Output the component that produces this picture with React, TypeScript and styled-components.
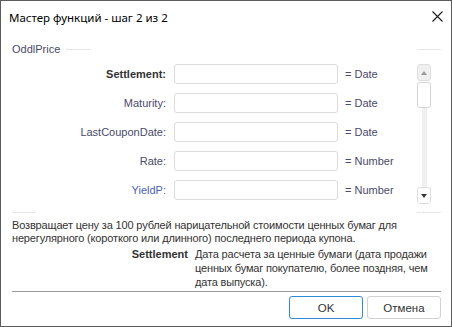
import styled, { createGlobalStyle } from "styled-components";

const GlobalStyle = createGlobalStyle`
  html, body {
    margin: 0;
    padding: 0;
    background: #ffffff;
  }
`;

type Arg = {
  name: string;
  type: string;
  bold?: boolean;
  link?: boolean;
};

const args: Arg[] = [
  { name: "Settlement", type: "Date", bold: true },
  { name: "Maturity", type: "Date" },
  { name: "LastCouponDate", type: "Date" },
  { name: "Rate", type: "Number" },
  { name: "YieldP", type: "Number", link: true },
];

export default function App() {
  return (
    <>
      <GlobalStyle />
      <Window>
        <TitleBar>
          <Title>Мастер функций - шаг 2 из 2</Title>
          <CloseButton type="button" aria-label="Закрыть">
            <svg width="11" height="11" viewBox="0 0 11 11">
              <path d="M0.5 0.5 L10.5 10.5 M10.5 0.5 L0.5 10.5" stroke="#1a1a1a" strokeWidth="1.1" />
            </svg>
          </CloseButton>
        </TitleBar>

        <Group>
          <LegendRow>
            <Legend>OddlPrice</Legend>
            <EdgeLine />
            <Spacer />
            <EdgeLine />
          </LegendRow>

          <FieldsArea>
            <FieldsGrid>
              {args.map((arg) => (
                <FieldRow key={arg.name}>
                  <FieldLabel $bold={arg.bold} $link={arg.link}>
                    {arg.name}:
                  </FieldLabel>
                  <FieldInput type="text" />
                  <FieldType>= {arg.type}</FieldType>
                </FieldRow>
              ))}
            </FieldsGrid>

            <ScrollBar>
              <ScrollButton $muted>
                <svg width="6" height="4" viewBox="0 0 6 4">
                  <path d="M0 4 L3 0 L6 4 Z" fill="#9a9a9a" />
                </svg>
              </ScrollButton>
              <ScrollThumb />
              <ScrollTrack />
              <ScrollButton>
                <svg width="6" height="4" viewBox="0 0 6 4">
                  <path d="M0 0 L6 0 L3 4 Z" fill="#3a3a3a" />
                </svg>
              </ScrollButton>
            </ScrollBar>
          </FieldsArea>

          <BottomEdge>
            <EdgeLine />
            <Spacer />
            <EdgeLine />
          </BottomEdge>
        </Group>

        <Description>
          Возвращает цену за 100 рублей нарицательной стоимости ценных бумаг для
          нерегулярного (короткого или длинного) последнего периода купона.
        </Description>

        <ArgHelp>
          <ArgName>Settlement</ArgName>
          <ArgText>
            Дата расчета за ценные бумаги (дата продажи ценных бумаг покупателю,
            более поздняя, чем дата выпуска).
          </ArgText>
        </ArgHelp>

        <Footer>
          <DialogButton type="button" $primary>
            OK
          </DialogButton>
          <DialogButton type="button">Отмена</DialogButton>
        </Footer>
      </Window>
    </>
  );
}

const Window = styled.div`
  box-sizing: border-box;
  width: 452px;
  height: 327px;
  border: 1px solid #5c5c5c;
  background: #ffffff;
  display: flex;
  flex-direction: column;
  font-family: "Liberation Sans", Arial, sans-serif;
  font-size: 11px;
  color: #333333;
  overflow: hidden;
`;

const TitleBar = styled.div`
  height: 32px;
  display: flex;
  align-items: center;
  justify-content: space-between;
  padding: 0 0 0 8px;
`;

const Title = styled.span`
  font-family: "Noto Sans", "Open Sans", sans-serif;
  font-size: 11.5px;
  color: #000000;
  margin-top: 1px;
`;

const CloseButton = styled.button`
  width: 28px;
  height: 28px;
  margin-top: -2px;
  border: none;
  background: transparent;
  display: flex;
  align-items: center;
  justify-content: center;
  padding: 0;
  cursor: pointer;
`;

const Group = styled.section`
  margin: 9px 10px 0 11px;
  display: flex;
  flex-direction: column;
`;

const LegendRow = styled.div`
  height: 14px;
  display: flex;
  align-items: center;
`;

const BottomEdge = styled.div`
  height: 1px;
  margin-top: 8px;
  display: flex;
`;

const Legend = styled.span`
  color: #4a4a6a;
  margin-right: 6px;
`;

const EdgeLine = styled.span`
  width: 24px;
  height: 1px;
  background: #e6e6e6;
`;

const Spacer = styled.span`
  flex: 1;
`;

const FieldsArea = styled.div`
  display: flex;
  margin-top: 8px;
`;

const FieldsGrid = styled.div`
  display: flex;
  flex-direction: column;
  gap: 9px;
  width: 394px;
`;

const FieldRow = styled.div`
  display: grid;
  grid-template-columns: 154px 164px auto;
  column-gap: 8px;
  align-items: center;
  height: 20px;
`;

const FieldLabel = styled.label<{ $bold?: boolean; $link?: boolean }>`
  text-align: right;
  font-weight: ${(p) => (p.$bold ? 700 : 400)};
  color: ${(p) => (p.$bold ? "#333333" : p.$link ? "#4a5fb0" : "#4a4a6a")};
  white-space: nowrap;
`;

const FieldInput = styled.input`
  box-sizing: border-box;
  width: 164px;
  height: 20px;
  border: 1px solid #dcdcdc;
  border-radius: 3px;
  background: #ffffff;
  outline: none;
  padding: 0 4px;
  font: inherit;
`;

const FieldType = styled.span`
  color: #4a4a6a;
  margin-left: -1px;
  white-space: nowrap;
`;

const ScrollBar = styled.div`
  width: 14px;
  height: 140px;
  margin-left: 11px;
  display: flex;
  flex-direction: column;
  align-items: center;
`;

const ScrollButton = styled.div<{ $muted?: boolean }>`
  box-sizing: border-box;
  width: 14px;
  height: 17px;
  border: 1px solid #dedede;
  border-radius: 3px;
  background: ${(p) => (p.$muted ? "#f0f0f0" : "#ffffff")};
  display: flex;
  align-items: center;
  justify-content: center;
`;

const ScrollThumb = styled.div`
  box-sizing: border-box;
  width: 14px;
  height: 26px;
  margin-top: 1px;
  border: 1px solid #d4d4d4;
  border-radius: 3px;
  background: #ffffff;
`;

const ScrollTrack = styled.div`
  flex: 1;
  width: 5px;
  background: #f0f0f0;
`;

const Description = styled.p`
  margin: 6px 10px 0 11px;
  line-height: 13px;
  letter-spacing: -0.16px;
  color: #333333;
`;

const ArgHelp = styled.div`
  display: grid;
  grid-template-columns: 176px 1fr;
  column-gap: 7px;
  margin: 2px 10px 0 11px;
  line-height: 14px;
`;

const ArgName = styled.span`
  text-align: right;
  font-weight: 700;
  color: #333333;
`;

const ArgText = styled.span`
  color: #333333;
  letter-spacing: -0.16px;
`;

const Footer = styled.div`
  margin: auto 10px 0 11px;
  border-top: 1px solid #9a9a9a;
  padding: 4px 0 7px;
  display: flex;
  justify-content: flex-end;
  gap: 4px;
`;

const DialogButton = styled.button<{ $primary?: boolean }>`
  box-sizing: border-box;
  width: 74px;
  height: 23px;
  border: 1px solid ${(p) => (p.$primary ? "#2f8ad6" : "#d2d2d2")};
  border-radius: 3px;
  background: #ffffff;
  font-family: "Liberation Sans", Arial, sans-serif;
  font-size: 11.5px;
  color: #333333;
  cursor: pointer;
`;
